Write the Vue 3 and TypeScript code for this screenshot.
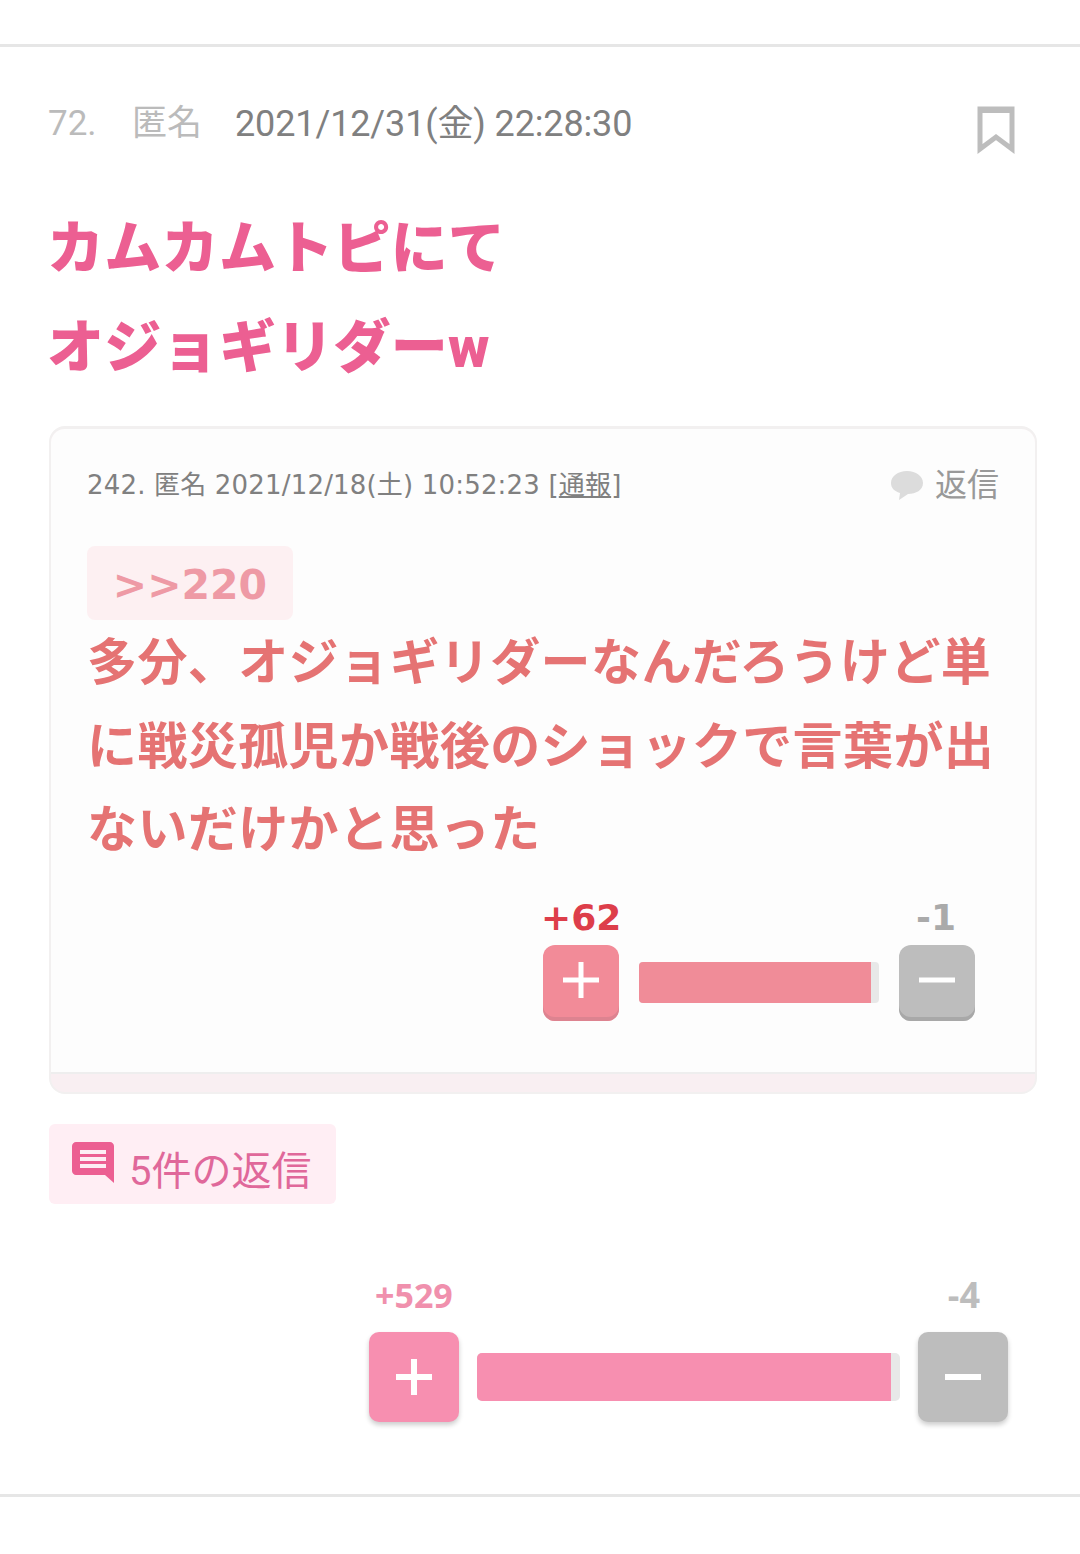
<template>
  <div class="page">
    <div class="post">
      <div class="post-head">
        <div class="post-meta">
          <span class="no">72.</span>
          <span class="name">匿名</span>
          <span class="date">2021/12/31(金) 22:28:30</span>
        </div>
        <svg class="bookmark" viewBox="0 0 38 48" width="38" height="48">
          <path d="M3 3H35V43L19 31L3 43Z" fill="none" stroke="#bdbdbd" stroke-width="5" />
          <path d="M1 1H37V7H1Z" fill="#bdbdbd" />
        </svg>
      </div>

      <h1 class="title">カムカムトピにて<br />オジョギリダーw</h1>

      <div class="quote">
        <div class="quote-main">
          <div class="quote-head">
            <div class="quote-meta">242. 匿名 2021/12/18(土) 10:52:23 [<u>通報</u>]</div>
            <div class="quote-reply">
              <svg viewBox="0 0 34 32" width="34" height="32">
                <path d="M17 2C26 2 33 7 33 14C33 21 26 25 18 25L9 31L10 24C4 22 1 19 1 14C1 7 8 2 17 2Z" fill="#dcdcdc" />
              </svg>
              <span>返信</span>
            </div>
          </div>
          <div class="mention">&gt;&gt;220</div>
          <p class="quote-body">多分、オジョギリダーなんだろうけど単に戦災孤児か戦後のショックで言葉が出ないだけかと思った</p>
          <div class="vote vote-small">
            <div class="counts">
              <span class="plus">+{{ quoteVote.plus }}</span>
              <span class="minus">-{{ quoteVote.minus }}</span>
            </div>
            <div class="controls">
              <button class="btn btn-plus"><i class="h"></i><i class="v"></i></button>
              <div class="bar"><div class="fill" :style="{ width: quoteVote.rate + '%' }"></div></div>
              <button class="btn btn-minus"><i class="h"></i></button>
            </div>
          </div>
        </div>
      </div>

      <div class="replies">
        <svg viewBox="0 0 42 42" width="42" height="42">
          <path d="M4 0H38C40 0 42 2 42 4V41L33 33H4C2 33 0 31 0 29V4C0 2 2 0 4 0Z" fill="#ec5f92" />
          <path d="M8 8H34V12H8ZM8 15H34V19H8ZM8 22H34V26H8Z" fill="#fdeef4" />
        </svg>
        <span>5件の返信</span>
      </div>

      <div class="vote vote-large">
        <div class="counts">
          <span class="plus">+{{ postVote.plus }}</span>
          <span class="minus">-{{ postVote.minus }}</span>
        </div>
        <div class="controls">
          <button class="btn btn-plus"><i class="h"></i><i class="v"></i></button>
          <div class="bar"><div class="fill" :style="{ width: postVote.rate + '%' }"></div></div>
          <button class="btn btn-minus"><i class="h"></i></button>
        </div>
      </div>
    </div>
  </div>
</template>

<script setup lang="ts">
const quoteVote = { plus: 62, minus: 1, rate: 96.7 }
const postVote = { plus: 529, minus: 4, rate: 97.9 }
</script>

<style>
html, body { margin: 0; background: #fff; }
</style>

<style scoped>
.page {
  height: 1554px;
  box-sizing: border-box;
  padding-top: 44px;
  overflow: hidden;
  font-family: Roboto, "Noto Sans CJK JP", sans-serif;
}
.post {
  height: 1453px;
  box-sizing: border-box;
  border-top: 3px solid #e6e6e6;
  border-bottom: 3px solid #e6e6e6;
  padding: 54px 43px 0 49px;
}
.post-head {
  display: flex;
  justify-content: space-between;
  padding-right: 22px;
  height: 59px;
}
.post-meta {
  display: flex;
  font-size: 35px;
  line-height: 46px;
  color: #bbb;
  margin-left: -1px;
}
.no { width: 84px; }
.name { width: 103px; }
.date { color: #808080; font-size: 36px; letter-spacing: -.13px; }
.bookmark { margin-top: 5px; }
.title {
  margin: 39px 0 0 -2px;
  font-size: 57px;
  line-height: 99px;
  font-weight: 900;
  letter-spacing: .3px;
  color: #ec5f92;
}
.quote {
  margin-top: 29px;
  height: 668px;
  box-sizing: border-box;
  border-radius: 16px;
  background: #f9eff2;
  border: 2px solid #f2f0f0;
  border-top-width: 3px;
}
.quote-main {
  height: 645px;
  box-sizing: border-box;
  padding: 36px 36px 0;
  background: #fdfdfd;
  border-radius: 14px 14px 0 0;
  border-bottom: 2px solid #eee;
}
.quote-head {
  display: flex;
  justify-content: space-between;
  align-items: flex-start;
  height: 44px;
}
.quote-meta {
  font-family: "DejaVu Sans", "Noto Sans CJK JP", sans-serif;
  font-size: 26px;
  letter-spacing: .18px;
  line-height: 40px;
  color: #808080;
}
.quote-reply {
  display: flex;
  align-items: center;
  gap: 11px;
  font-size: 32px;
  line-height: 40px;
  color: #999;
}
.mention {
  margin-top: 37px;
  width: 206px;
  height: 74px;
  box-sizing: border-box;
  border-radius: 8px;
  background: #fdf0f2;
  color: #ee9aa5;
  font-family: "DejaVu Sans", sans-serif;
  font-size: 41px;
  font-weight: 700;
  line-height: 78px;
  text-align: center;
}
.quote-body {
  margin: 2px 0 0;
  font-size: 50px;
  letter-spacing: .4px;
  line-height: 83.5px;
  font-weight: 700;
  color: #e57373;
  width: 915px;
}
.vote { margin-left: auto; }
.vote-small { width: 432px; margin: 25px 24px 0 auto; }
.vote-large { width: 639px; margin: 69px 29px 0 auto; }
.counts {
  display: flex;
  justify-content: space-between;
  font-weight: 700;
}
.vote-small .counts {
  font-family: "DejaVu Sans", sans-serif;
  font-size: 36px;
  line-height: 40px;
  padding: 0 19px 0 0;
}
.vote-small .plus { margin-left: -2px; }
.vote-large .counts {
  font-family: "Open Sans", sans-serif;
  font-size: 34px;
  line-height: 44px;
  padding: 0 28px 0 6px;
  margin-bottom: 15px;
}
.vote-small .plus { color: #dd3e4a; }
.vote-large .plus { color: #f090ad; }
.vote-small .minus { color: #aaa; }
.vote-large .minus { color: #bdbdbd; font-size: 36px; }
.controls {
  display: flex;
  align-items: center;
}
.vote-small .controls { gap: 20px; margin-top: 7px; }
.vote-large .controls { gap: 18px; }
.btn {
  position: relative;
  flex: none;
  padding: 0;
  border: 0;
}
.vote-small .btn {
  width: 76px;
  height: 76px;
  border-radius: 12px;
}
.vote-large .btn {
  width: 90px;
  height: 90px;
  border-radius: 10px;
}
.vote-small .btn-plus { background: #f28b98; box-shadow: inset 0 -4px 0 #dd8390; }
.vote-small .btn-minus { background: #bdbdbd; box-shadow: inset 0 -4px 0 #a8a8a8; }
.vote-large .btn-plus { background: #f78fb0; box-shadow: 0 3px 5px rgba(0, 0, 0, .2); }
.vote-large .btn-minus { background: #bdbdbd; box-shadow: 0 3px 5px rgba(0, 0, 0, .2); }
.btn i {
  position: absolute;
  left: 50%;
  top: 50%;
  background: #fff;
  transform: translate(-50%, -50%);
}
.vote-small .h { width: 36px; height: 5px; margin-top: -3px; }
.vote-small .v { width: 5px; height: 36px; margin-top: -3px; }
.vote-large .h { width: 36px; height: 6px; }
.vote-large .v { width: 6px; height: 36px; }
.bar {
  flex: 1;
  background: #e8e8e8;
  overflow: hidden;
}
.vote-small .bar { height: 41px; border-radius: 4px; }
.vote-large .bar { height: 48px; border-radius: 5px; }
.fill { height: 100%; }
.vote-small .fill { background: #f08c98; }
.vote-large .fill { background: #f78fb0; }
.replies {
  margin-top: 30px;
  width: 287px;
  height: 80px;
  box-sizing: border-box;
  padding: 18px 0 0 23px;
  display: flex;
  gap: 15px;
  background: #ffeef4;
  border-radius: 6px;
  font-size: 40px;
  line-height: 54px;
  color: #e0689a;
}
.replies span { margin-top: 3px; }
</style>
